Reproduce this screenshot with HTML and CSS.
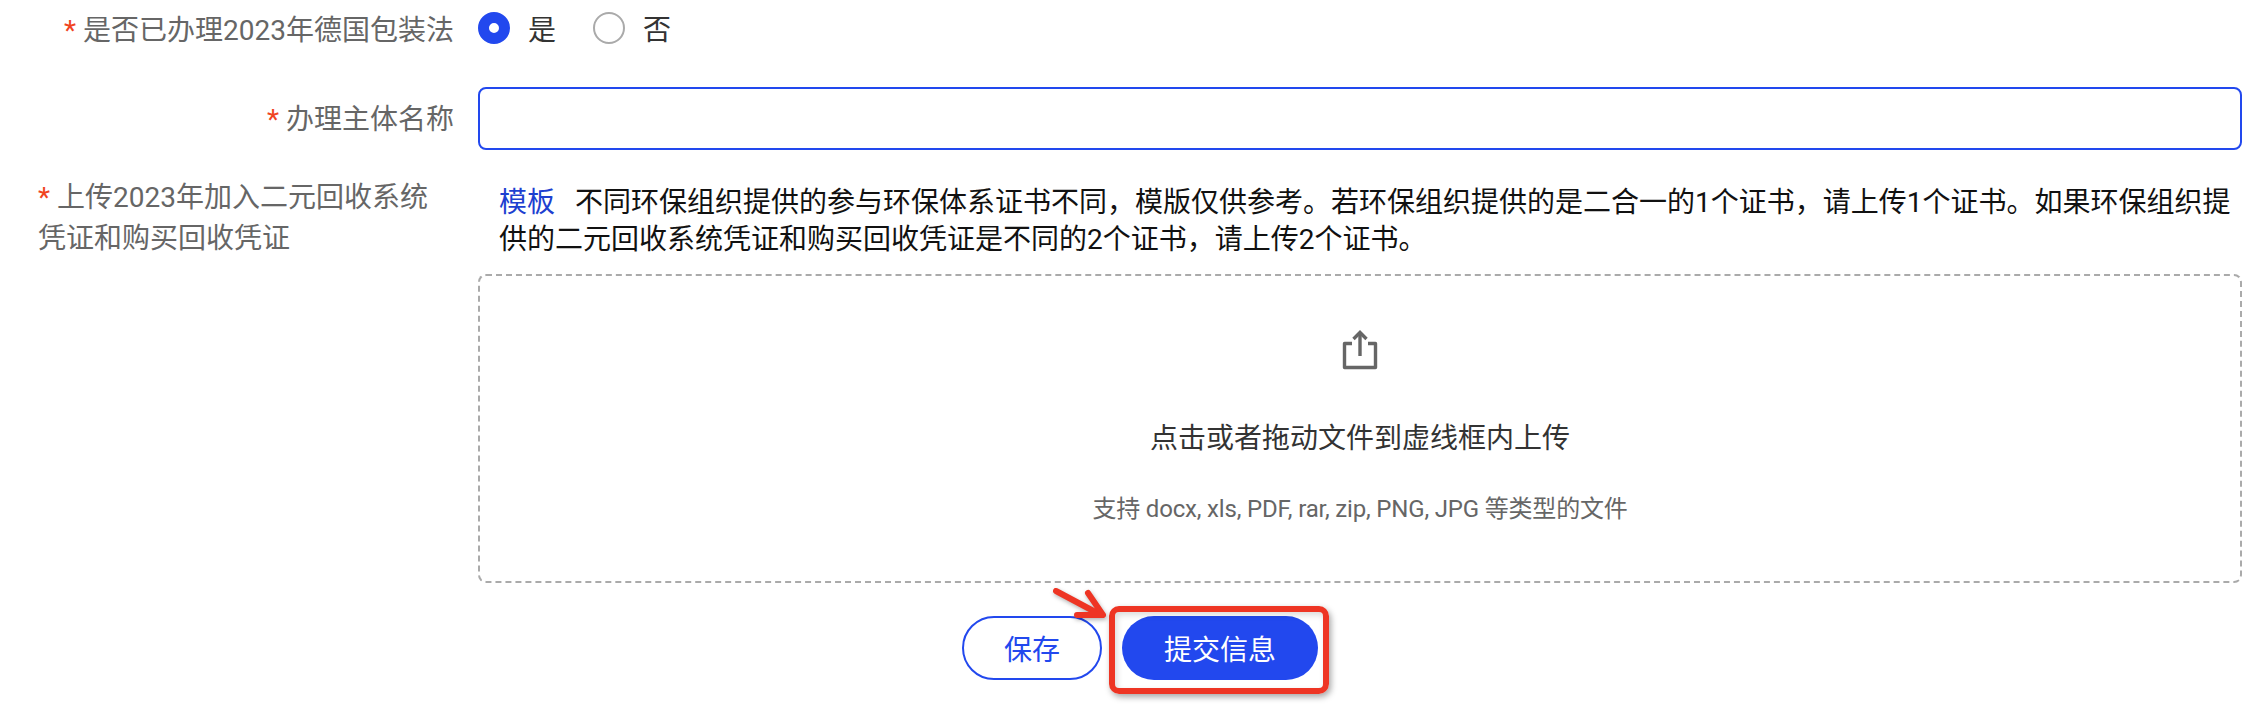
FILE: index.html
```html
<!DOCTYPE html>
<html lang="zh-CN">
<head>
  <meta charset="UTF-8">
  <title>提交信息</title>
  <link rel="stylesheet" href="styles.css">
</head>
<body>

  <form class="form">
    <div class="row row-radio">
      <label class="label"><span class="star">*</span> 是否已办理2023年德国包装法</label>
      <div class="radios">
        <span class="radio checked"></span><span class="radio-text">是</span>
        <span class="radio"></span><span class="radio-text">否</span>
      </div>
    </div>

    <div class="row row-input">
      <label class="label label-input"><span class="star">*</span> 办理主体名称</label>
      <div class="text-input"></div>
    </div>

    <div class="row row-upload">
      <label class="label label-long"><span class="star">*</span> 上传2023年加入二元回收系统凭证和购买回收凭证</label>
      <div class="field">
        <p class="tip"><a class="link">模板</a>不同环保组织提供的参与环保体系证书不同，模版仅供参考。若环保组织提供的是二合一的1个证书，请上传1个证书。如果环保组织提供的二元回收系统凭证和购买回收凭证是不同的2个证书，请上传2个证书。</p>
        <div class="upload">
          <svg class="upload-icon" width="38" height="40" viewBox="0 0 38 40" fill="none" stroke="#666" stroke-width="3.4">
            <path d="M11 13.5H3.5V37.5H34.5V13.5H27" stroke-linejoin="round"/>
            <path d="M19 26V3"/>
            <path d="M12.5 9L19 2.5L25.5 9"/>
          </svg>
          <div class="upload-title">点击或者拖动文件到虚线框内上传</div>
          <div class="upload-sub">支持 docx, xls, PDF, rar, zip, PNG, JPG 等类型的文件</div>
        </div>
      </div>
    </div>

    <div class="actions">
      <button type="button" class="btn btn-save">保存</button>
      <button type="button" class="btn btn-submit">提交信息</button>
      <span class="mark-box"></span>
      <svg class="mark-arrow" width="60" height="36" viewBox="0 0 60 36" fill="none" stroke="#ee3524" stroke-linecap="round" stroke-linejoin="round">
        <path d="M3 3L48 27" stroke-width="6"/>
        <path d="M35 5L50 27L24 27" stroke-width="6"/>
      </svg>
    </div>
  </form>

</body>
</html>
```

FILE: styles.css
```css
* {
  box-sizing: border-box;
}

body {
  margin: 0;
  min-height: 712px;
  background: #fff;
  font-family: Roboto, "Noto Sans CJK SC", sans-serif;
  font-size: 28px;
  color: #111;
}

.form {
  padding-right: 14px;
}

.row {
  display: flex;
}

.label {
  flex: none;
  width: 454px;
  margin-right: 24px;
  color: #666;
  text-align: right;
  white-space: nowrap;
}

.label-input {
  margin-top: -3px;
}

.star {
  color: #f0441f;
}

.row-radio {
  height: 56px;
  align-items: center;
}

.radios {
  display: flex;
  align-items: center;
}

.radio {
  width: 32px;
  height: 32px;
  border: 2px solid #aaa;
  border-radius: 50%;
}

.radio.checked {
  border: 11px solid #2248ee;
  background: #fff;
}

.radio-text {
  margin-left: 18px;
  margin-right: 37px;
  color: #333;
}

.row-input {
  margin-top: 31px;
  height: 63px;
  align-items: center;
}

.text-input {
  flex: 1;
  height: 63px;
  border: 2px solid #2248ee;
  border-radius: 8px;
}

.row-upload {
  margin-top: 30px;
}

.label-long {
  margin-top: -3px;
  padding-left: 38px;
  text-align: left;
  white-space: normal;
  line-height: 41px;
}

.field {
  flex: 1;
}

.tip {
  margin: 4px 0 0;
  padding: 0 4px 0 21px;
  line-height: 37px;
}

.link {
  color: #1d3fd0;
  margin-right: 20px;
}

.upload {
  display: flex;
  flex-direction: column;
  align-items: center;
  height: 309px;
  margin-top: 16px;
  padding-top: 54px;
  border: 2px dashed #aaa;
  border-radius: 8px;
}

.upload-title {
  margin-top: 46px;
  color: #333;
}

.upload-sub {
  margin-top: 33px;
  font-size: 24px;
  letter-spacing: -0.18px;
  color: #666;
}

.actions {
  position: relative;
  display: flex;
  justify-content: center;
  gap: 20px;
  margin-top: 33px;
  padding-left: 38px;
}

.btn {
  height: 64px;
  border-radius: 32px;
  font: inherit;
}

.btn-save {
  width: 140px;
  border: 2px solid #2248ee;
  background: #fff;
  color: #2248ee;
}

.btn-submit {
  width: 196px;
  border: none;
  background: #2248ee;
  color: #fff;
}

/* red annotation drawn on top of the screenshot */
.mark-box {
  position: absolute;
  left: 1109px;
  top: -10px;
  width: 220px;
  height: 88px;
  border: 6px solid #ee3524;
  border-radius: 10px;
  box-shadow: 2px 3px 6px rgba(0, 0, 0, 0.35), inset 2px 3px 6px rgba(0, 0, 0, 0.15);
}

.mark-arrow {
  position: absolute;
  left: 1053px;
  top: -28px;
  filter: drop-shadow(1px 2px 2px rgba(0, 0, 0, 0.3));
}
```
